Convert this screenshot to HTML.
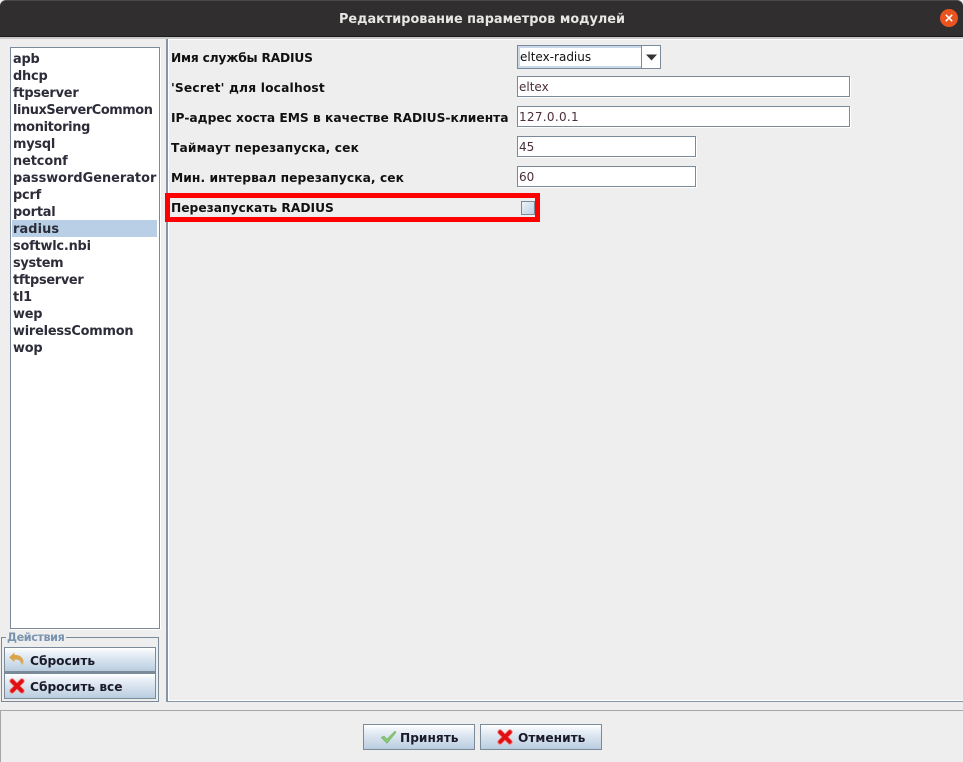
<!DOCTYPE html>
<html><head><meta charset="utf-8">
<style>
*{box-sizing:border-box}
html,body{margin:0;padding:0;width:963px;height:762px;overflow:hidden;background:#eee;font-family:"DejaVu Sans",sans-serif;font-size:12px;font-weight:bold;color:#1a1a1a}
.a{position:absolute;white-space:nowrap}
.title{left:0;top:0;width:963px;height:37px;background:#302e2e;border-radius:6px 6px 0 0;border-top:1px solid #4a4848;border-bottom:1px solid #1c1b1b;color:#e8e6e3;font-size:12.85px;text-align:center;line-height:37px;padding-left:1px}
.li{left:13px;font-size:12.9px;height:17px;line-height:17px;color:#2d2d3a;letter-spacing:-.2px}
.lab{left:171px;color:#111;font-size:12.25px;line-height:16px}
.inp{background:#fff;border:1px solid #7a8a99;box-shadow:1px 1px 0 #fff;font-weight:normal;font-size:12px;color:#4a2f3a;line-height:21px;padding-left:1px}
.btn{background:linear-gradient(#fff 0,#e8eff6 25%,#b9cde0 100%);border:1px solid #7a8a99;color:#1a1a2a;font-size:12.2px;line-height:26px}
</style></head><body>
<div class="a title">Редактирование параметров модулей</div>
<svg class="a" style="left:940px;top:9px" width="18" height="18" viewBox="0 0 18 18"><circle cx="9" cy="9" r="9" fill="#e95420"/><path d="M5.8 5.8L12.2 12.2M12.2 5.8L5.8 12.2" stroke="#fff" stroke-width="1.5" fill="none"/></svg>

<div class="a" style="left:0;top:37px;width:963px;height:2px;background:#c9c9c9"></div>
<div class="a" style="left:10px;top:47px;width:150px;height:582px;background:#fff;border:1px solid #7a8a99;box-shadow:1px 1px 0 #fff"></div>
<div class="a" style="left:12px;top:220px;width:145px;height:17px;background:#b8cfe5"></div>
<div class="a li" style="top:51px">apb</div>
<div class="a li" style="top:68px">dhcp</div>
<div class="a li" style="top:85px">ftpserver</div>
<div class="a li" style="top:102px;letter-spacing:-.42px">linuxServerCommon</div>
<div class="a li" style="top:119px;letter-spacing:-.3px">monitoring</div>
<div class="a li" style="top:136px">mysql</div>
<div class="a li" style="top:153px;letter-spacing:-.1px">netconf</div>
<div class="a li" style="top:170px;letter-spacing:0">passwordGenerator</div>
<div class="a li" style="top:187px">pcrf</div>
<div class="a li" style="top:204px">portal</div>
<div class="a li" style="top:221px;letter-spacing:.1px">radius</div>
<div class="a li" style="top:238px">softwlc.nbi</div>
<div class="a li" style="top:255px;letter-spacing:-.3px">system</div>
<div class="a li" style="top:272px;letter-spacing:-.3px">tftpserver</div>
<div class="a li" style="top:289px">tl1</div>
<div class="a li" style="top:306px">wep</div>
<div class="a li" style="top:323px">wirelessCommon</div>
<div class="a li" style="top:340px">wop</div>

<div class="a" style="left:1px;top:637px;width:158px;height:65px;border:1px solid #7a8a99"></div>
<div class="a" style="left:6px;top:630px;background:#eee;padding:0 2px 0 1px;color:#7a94b0;font-size:11.2px;letter-spacing:-.4px;line-height:16px">Действия</div>
<div class="a btn" style="left:4px;top:647px;width:152px;height:26px;padding-left:25px;border-bottom:2px solid #7a8a99">Сбросить</div>
<div class="a btn" style="left:4px;top:673px;width:152px;height:26px;padding-left:25px">Сбросить все</div>
<svg class="a" style="left:8px;top:651px" width="17" height="16" viewBox="0 0 17 16"><defs><linearGradient id="u" x1="0" y1="0" x2="0" y2="1"><stop offset="0" stop-color="#dba03a"/><stop offset=".7" stop-color="#d9a85a"/><stop offset="1" stop-color="#d8dfe6"/></linearGradient></defs><path d="M1 6.5L6.5 1.5V4C11.5 3.5 15.5 6.5 15.5 11C15.5 13 14.5 14.5 13 15.5C13.6 13 13 9.5 9.5 8.6C8.5 8.4 7.5 8.4 6.5 8.6V11Z" fill="url(#u)"/></svg>
<svg class="a" style="left:9px;top:678px" width="16" height="16" viewBox="0 0 16 16"><path d="M3 3L13 13M13 3L3 13" stroke="#f08a8a" stroke-width="5.4" stroke-linecap="round" fill="none"/><path d="M3.2 3.2L12.8 12.8M12.8 3.2L3.2 12.8" stroke="#e00f14" stroke-width="3.8" stroke-linecap="round" fill="none"/></svg>

<div class="a" style="left:166px;top:39px;width:797px;height:663px;border-left:2px solid #8496a8;border-bottom:1px solid #8496a8"></div>
<div class="a" style="left:168px;top:39px;width:795px;height:662px;border-left:1px solid #fff;border-top:1px solid #fff;border-bottom:1px solid #fff"></div>

<div class="a lab" style="top:50px;letter-spacing:-.2px">Имя службы RADIUS</div>
<div class="a lab" style="top:80px;letter-spacing:.18px">'Secret' для localhost</div>
<div class="a lab" style="top:110px">IP-адрес хоста EMS в качестве RADIUS-клиента</div>
<div class="a lab" style="top:140px;letter-spacing:.12px">Таймаут перезапуска, сек</div>
<div class="a lab" style="top:170px;letter-spacing:.07px">Мин. интервал перезапуска, сек</div>

<div class="a" style="left:517px;top:45px;width:144px;height:24px;background:#fff;border:1px solid #7a8a99"></div>
<div class="a" style="left:518px;top:46px;width:124px;height:22px;border:2px solid #c9d9ea;border-right:1px solid #c9d9ea;font-weight:normal;line-height:18px;color:#111">eltex-radius</div>
<div class="a" style="left:641px;top:46px;width:1px;height:22px;background:#7a8a99"></div>
<svg class="a" style="left:645px;top:54px" width="13" height="7" viewBox="0 0 13 7"><path d="M1 .5H12L6.5 6.5Z" fill="#333"/></svg>

<div class="a inp" style="left:517px;top:76px;width:333px;height:21px">eltex</div>
<div class="a inp" style="left:517px;top:106px;width:333px;height:21px;letter-spacing:.3px">127.0.0.1</div>
<div class="a inp" style="left:517px;top:136px;width:179px;height:21px">45</div>
<div class="a inp" style="left:517px;top:166px;width:179px;height:21px">60</div>

<div class="a" style="left:165px;top:193px;width:375px;height:29px;border:5px solid #f00"></div>
<div class="a lab" style="top:200px">Перезапускать RADIUS</div>
<div class="a" style="left:521px;top:201px;width:14px;height:14px;background:linear-gradient(135deg,#eef3f8,#bccfe2);border:1px solid #7a8a99"></div>

<div class="a" style="left:0;top:710px;width:963px;height:52px;border-top:1px solid #a6a6a6;border-left:1px solid #a6a6a6"></div>
<div class="a btn" style="left:363px;top:724px;width:112px;height:26px;padding-left:36px">Принять</div>
<div class="a btn" style="left:480px;top:724px;width:122px;height:26px;padding-left:37px">Отменить</div>
<svg class="a" style="left:380px;top:730px" width="17" height="14" viewBox="0 0 17 14"><path d="M1 7.5L4 6L7 9L15 1L16 2.5L7 13.5Z" fill="#84c674" stroke="#6fa866" stroke-width=".5"/></svg>
<svg class="a" style="left:497px;top:729px" width="16" height="16" viewBox="0 0 16 16"><path d="M3 3L13 13M13 3L3 13" stroke="#f08a8a" stroke-width="5.4" stroke-linecap="round" fill="none"/><path d="M3.2 3.2L12.8 12.8M12.8 3.2L3.2 12.8" stroke="#e00f14" stroke-width="3.8" stroke-linecap="round" fill="none"/></svg>
</body></html>
